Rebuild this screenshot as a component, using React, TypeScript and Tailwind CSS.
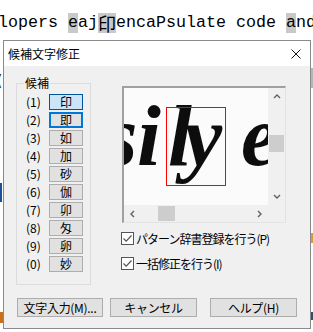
import React from 'react';

const cands = ['印', '即', '如', '加', '砂', '伽', '卯', '匁', '卵', '妙'];
const keys = ['1', '2', '3', '4', '5', '6', '7', '8', '9', '0'];

const ui = { fontFamily: '"Noto Sans CJK JP", "Noto Sans", sans-serif' };

function Chevron({ dir }: { dir: 'up' | 'down' | 'left' | 'right' }) {
  const d = {
    up: 'M1 5 L4 2 L7 5',
    down: 'M1 2 L4 5 L7 2',
    left: 'M5 1 L2 4 L5 7',
    right: 'M2 1 L5 4 L2 7',
  }[dir];
  return (
    <svg width="8" height="8" viewBox="0 0 8 8" fill="none">
      <path d={d} stroke="#606060" strokeWidth="1.4" />
    </svg>
  );
}

function CheckBox() {
  return (
    <div className="w-[13px] h-[13px] border border-[#555] bg-white flex items-center justify-center shrink-0">
      <svg width="11" height="11" viewBox="0 0 11 11" fill="none">
        <path d="M1.5 5.5 L4.2 8.2 L9.5 2.5" stroke="#555" strokeWidth="1.2" />
      </svg>
    </div>
  );
}

function Btn({ w, children }: { w: string; children: React.ReactNode }) {
  return (
    <div
      className={`${w} h-[19px] bg-[#e1e1e1] border border-[#adadad] flex items-center justify-center text-[12px] leading-none text-black tracking-[-0.3px]`}
    >
      {children}
    </div>
  );
}

export default function App() {
  return (
    <div className="w-[313px] h-[332px] bg-white overflow-hidden" style={ui}>
      {/* editor line behind the dialog */}
      <div className="h-[40px] pt-[13px] whitespace-pre">
        <div
          className="ml-[-2px] h-[20px] flex items-center text-[16.67px] leading-[20px] text-black"
          style={{ fontFamily: '"Liberation Mono", monospace' }}
        >
          <span className="whitespace-pre">{'lopers '}</span>
          <span className="bg-[#c9c9c9]">e</span>
          <span>aj</span>
          <span
            className="bg-[#c9c9c9] w-[20px] inline-block text-center text-[18px]"
            style={ui}
          >
            印
          </span>
          <span className="whitespace-pre">{'encaPsulate code '}</span>
          <span className="bg-[#c9c9c9]">a</span>
          <span>nd</span>
        </div>
      </div>

      <div className="flex">
        {/* left strip */}
        <div className="w-[3px] flex flex-col overflow-hidden">
          <span className="mt-[32px] ml-[-3px] text-[14px] leading-[14px]">(</span>
          <div className="mt-[97px] h-[19px] w-[2px] bg-[#1a4f9c]" />
          <div className="mt-[110px] h-[11px] w-[3px] bg-[#c8701e]" />
        </div>

        {/* dialog */}
        <div className="w-[308px] h-[289px] border border-[#8a8a8a] bg-[#f0f0f0] flex flex-col">
          <div className="h-[25px] bg-white flex items-center justify-between pl-[4px] pr-[9px]">
            <span className="text-[12px] leading-none text-black">候補文字修正</span>
            <svg width="10" height="10" viewBox="0 0 10 10">
              <path d="M0.5 0.5 L9.5 9.5 M9.5 0.5 L0.5 9.5" stroke="#111" strokeWidth="1" />
            </svg>
          </div>

          <div className="flex-1 flex flex-col pl-[12px] pt-[10px]">
            <div className="flex">
              {/* candidates group */}
              <fieldset className="w-[75px] h-[209px] border border-[#dcdcdc]">
                <legend className="ml-[7px] px-[1px] text-[12px] leading-[14px] text-black">候補</legend>
                <div className="flex flex-col mt-[3px] pl-[9px]">
                  {cands.map((c, i) => (
                    <div key={c} className="h-[18px] flex items-center">
                      <span className="w-[23px] text-[12px] leading-none text-black">({keys[i]})</span>
                      <div
                        className={
                          i === 0
                            ? 'w-[34px] h-[16px] bg-[#cce4f7] border border-[#005499] flex items-center justify-center text-[12px] leading-none'
                            : i === 1
                              ? 'w-[34px] h-[16px] bg-[#e1e1e1] border-2 border-[#0078d7] flex items-center justify-center text-[12px] leading-none'
                              : 'w-[34px] h-[16px] bg-[#e1e1e1] border border-[#adadad] flex items-center justify-center text-[12px] leading-none'
                        }
                      >
                        {c}
                      </div>
                    </div>
                  ))}
                </div>
              </fieldset>

              {/* preview + options */}
              <div className="ml-[31px] mt-[10px] flex flex-col">
                <div className="w-[164px] h-[137px] border-t-2 border-l-2 border-r border-b border-t-[#a0a0a0] border-l-[#a0a0a0] border-r-[#e3e3e3] border-b-[#e3e3e3] flex flex-col">
                  <div className="flex">
                    <svg width="144" height="117" viewBox="0 0 144 117" className="bg-[#fbfbfb]">
                      <defs>
                        <filter id="soft">
                          <feGaussianBlur stdDeviation="0.6" />
                        </filter>
                      </defs>
                      <g
                        filter="url(#soft)"
                        fontFamily='"Liberation Serif", serif'
                        fontStyle="italic"
                        fontWeight="bold"
                        fontSize="86"
                        fill="#111"
                      >
                        <text x="-20" y="77">s</text>
                        <text x="13" y="77">i</text>
                        <text x="44" y="77">l</text>
                        <text x="60" y="77">y</text>
                        <text x="117" y="77">e</text>
                      </g>
                      <rect x="42.5" y="19.5" width="59" height="78" fill="none" stroke="#ff0000" strokeWidth="1" />
                    </svg>
                    {/* vertical scrollbar */}
                    <div className="w-[17px] h-[117px] bg-[#f0f0f0] flex flex-col">
                      <div className="h-[17px] flex items-center justify-center">
                        <Chevron dir="up" />
                      </div>
                      <div className="h-[30px]" />
                      <div className="h-[17px] mx-[1px] bg-[#cdcdcd]" />
                      <div className="h-[36px]" />
                      <div className="h-[17px] flex items-center justify-center">
                        <Chevron dir="down" />
                      </div>
                    </div>
                  </div>
                  {/* horizontal scrollbar */}
                  <div className="flex h-[17px]">
                    <div className="w-[144px] bg-[#f0f0f0] flex">
                      <div className="w-[17px] flex items-center justify-center">
                        <Chevron dir="left" />
                      </div>
                      <div className="w-[17px]" />
                      <div className="w-[17px] my-[1px] bg-[#cdcdcd]" />
                      <div className="w-[76px]" />
                      <div className="w-[17px] flex items-center justify-center">
                        <Chevron dir="right" />
                      </div>
                    </div>
                    <div className="w-[17px] bg-[#f0f0f0]" />
                  </div>
                </div>

                <div className="mt-[9px] flex items-center gap-[2px] ml-[-1px]">
                  <CheckBox />
                  <span className="text-[12px] leading-none text-black tracking-[-1px]">パターン辞書登録を行う(P)</span>
                </div>
                <div className="mt-[12px] flex items-center gap-[2px] ml-[-1px]">
                  <CheckBox />
                  <span className="text-[12px] leading-none text-black tracking-[-1px]">一括修正を行う(I)</span>
                </div>
              </div>
            </div>

            {/* bottom buttons */}
            <div className="flex mt-[13px] ml-[1px]">
              <Btn w="w-[86px]">文字入力(M)...</Btn>
              <div className="w-[7px]" />
              <Btn w="w-[87px]">キャンセル</Btn>
              <div className="w-[13px]" />
              <Btn w="w-[87px]">ヘルプ(H)</Btn>
            </div>
          </div>
        </div>

        {/* right strip */}
        <div className="w-[2px] flex flex-col">
          <div className="mt-[28px] h-[20px] bg-[#b5b5b5]" />
          <div className="mt-[145px] h-[10px] bg-[#d89a3a]" />
          <div className="mt-[69px] h-[8px] bg-[#3a4a6a]" />
        </div>
      </div>
    </div>
  );
}
